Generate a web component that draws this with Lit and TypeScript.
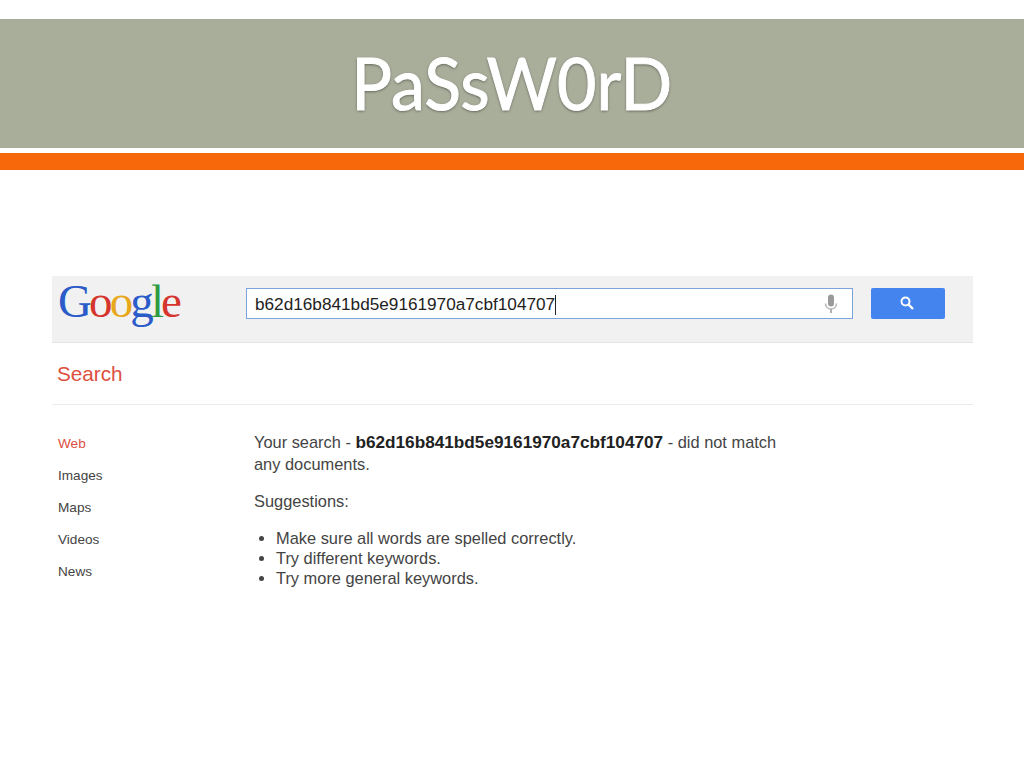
import { LitElement, html, css } from "lit";
import { customElement } from "lit/decorators.js";

const QUERY = "b62d16b841bd5e9161970a7cbf104707";
const NAV = ["Web", "Images", "Maps", "Videos", "News"];
const TIPS = [
  "Make sure all words are spelled correctly.",
  "Try different keywords.",
  "Try more general keywords.",
];

@customElement("app-root")
export class AppRoot extends LitElement {
  static styles = css`
    :host {
      display: block;
      width: 1024px;
      height: 768px;
      background: #fff;
      overflow: hidden;
      font-family: "Liberation Sans", Arial, sans-serif;
      color: #333;
    }

    .title-band {
      margin-top: 19px;
      height: 129px;
      background: #a9ae9b;
      display: flex;
      justify-content: center;
      align-items: center;
    }

    .title {
      font-family: Lato, "Open Sans", sans-serif;
      font-size: 72px;
      line-height: 72px;
      margin-top: -3px;
      transform: scaleX(0.945);
      color: #fff;
      -webkit-text-stroke: 1px #fff;
      text-shadow: 0 1px 3px rgba(0, 0, 0, 0.55);
    }

    .accent {
      margin-top: 5px;
      height: 17px;
      background: #f7680b;
    }

    .shot {
      margin: 106px 51px 0 52px;
    }

    .topbar {
      height: 66px;
      background: #f1f1f1;
      border-bottom: 1px solid #e5e5e5;
      display: flex;
      align-items: flex-start;
    }

    .logo {
      width: 194px;
      padding: 0 0 0 6px;
      box-sizing: border-box;
      font-family: "Liberation Serif", serif;
      font-size: 47px;
      line-height: 50px;
      letter-spacing: -2.9px;
    }

    .logo .b { color: #2a5bc9; }
    .logo .r { color: #d5352c; }
    .logo .y { color: #e8a81c; }
    .logo .g { color: #2f9a3f; }

    .searchbox {
      width: 607px;
      height: 31px;
      margin-top: 12px;
      box-sizing: border-box;
      background: #fff;
      border: 1px solid #7ba3e0;
      display: flex;
      align-items: center;
      padding: 2px 13px 0 8px;
      font-size: 17.2px;
      color: #222;
    }

    .caret {
      width: 1px;
      height: 20px;
      background: #222;
    }

    .mic {
      margin-left: auto;
      margin-top: -2px;
      width: 16px;
      height: 20px;
      display: block;
    }

    .go {
      width: 74px;
      height: 31px;
      margin: 12px 0 0 18px;
      border-radius: 2px;
      background: #4484ee;
      display: flex;
      align-items: center;
      justify-content: center;
    }

    .go svg {
      width: 16px;
      height: 16px;
      margin: 0 3px 2px 0;
    }

    .tab {
      height: 61px;
      border-bottom: 1px solid #ebebeb;
      padding: 0 0 0 5px;
      font-size: 20.7px;
      line-height: 61px;
      color: #dd5040;
    }

    .content {
      display: flex;
      padding-top: 27px;
    }

    .nav {
      width: 202px;
      padding-left: 6px;
      box-sizing: border-box;
      font-size: 13.6px;
      display: flex;
      flex-direction: column;
      gap: 16px;
      padding-top: 4px;
    }

    .nav span {
      line-height: 16px;
      color: #444;
    }

    .nav .on {
      color: #dd5040;
    }

    .main {
      width: 530px;
      font-size: 16.4px;
      color: #444;
    }

    .main p {
      margin: 0;
      line-height: 22px;
    }

    .main .lead {
      margin-top: -1px;
    }

    .main b {
      font-size: 17.2px;
      color: #222;
    }

    .main .sug {
      margin-top: 15px;
    }

    ul {
      margin: 16px 0 0;
      padding: 0 0 0 22px;
      line-height: 20.2px;
    }
  `;

  render() {
    return html`
      <div class="title-band"><div class="title">PaSsW0rD</div></div>
      <div class="accent"></div>
      <div class="shot">
        <div class="topbar">
          <div class="logo">
            <span class="b">G</span><span class="r">o</span><span class="y">o</span><span class="b">g</span><span class="g">l</span><span class="r">e</span>
          </div>
          <div class="searchbox">
            <span>${QUERY}</span><span class="caret"></span>
            <svg class="mic" viewBox="0 0 16 20">
              <rect x="5" y="0.5" width="6" height="12" rx="3" fill="#9a9a9a" />
              <path d="M2.5 9.5c0 3.5 2.5 5.5 5.5 5.5s5.5-2 5.5-5.5" fill="none" stroke="#b5b5b5" stroke-width="1.5" />
              <rect x="7" y="15" width="2" height="4" fill="#b0b0b0" />
            </svg>
          </div>
          <div class="go">
            <svg viewBox="0 0 16 16">
              <circle cx="6.5" cy="6.5" r="4" fill="none" stroke="#fff" stroke-width="2" />
              <path d="M9.5 9.5l4.5 4.5" stroke="#fff" stroke-width="2.4" />
            </svg>
          </div>
        </div>
        <div class="tab">Search</div>
        <div class="content">
          <div class="nav">
            ${NAV.map(
              (n, i) => html`<span class="${i === 0 ? "on" : ""}">${n}</span>`,
            )}
          </div>
          <div class="main">
            <p class="lead">Your search - <b>${QUERY}</b> - did not match any documents.</p>
            <p class="sug">Suggestions:</p>
            <ul>
              ${TIPS.map((t) => html`<li>${t}</li>`)}
            </ul>
          </div>
        </div>
      </div>
    `;
  }
}
